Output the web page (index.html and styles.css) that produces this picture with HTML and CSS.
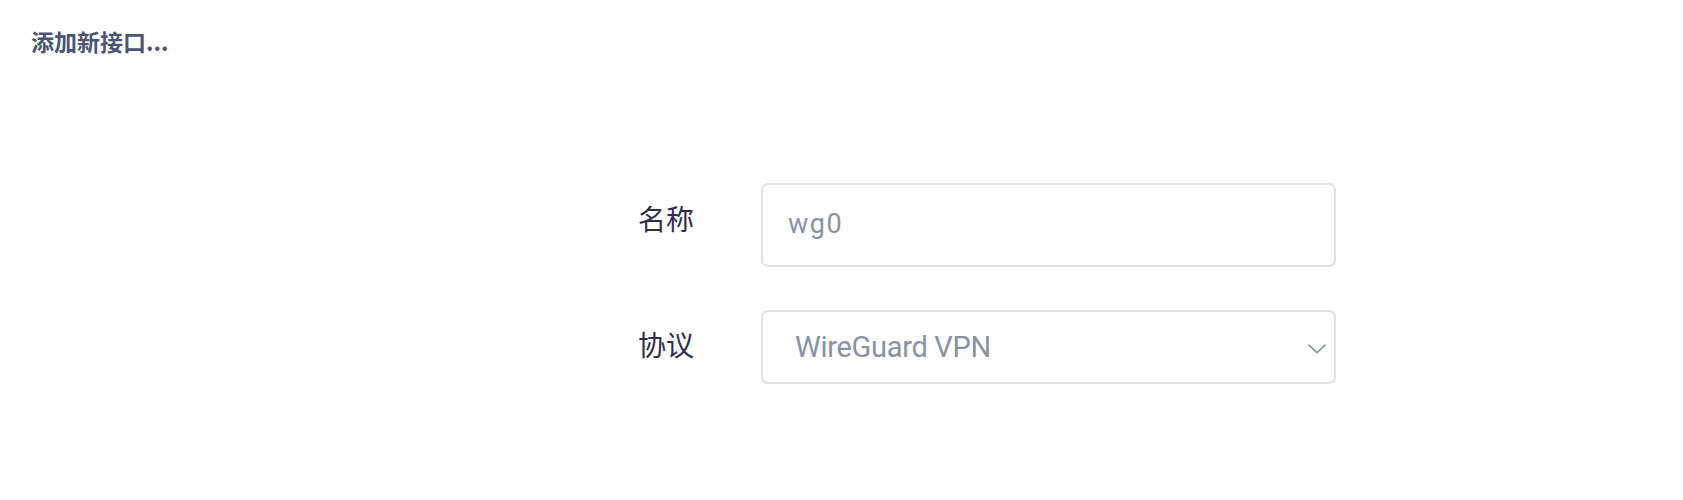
FILE: index.html
```html
<!DOCTYPE html>
<html lang="zh-CN">
<head>
<meta charset="utf-8">
<title>添加新接口</title>
<link rel="stylesheet" href="styles.css">
</head>
<body>
<div class="page">
  <h3 class="title">添加新接口...</h3>
  <div class="form">
    <div class="row row-name">
      <label class="label">名称</label>
      <div class="field input-field">
        <span class="placeholder">wg0</span>
      </div>
    </div>
    <div class="row row-proto">
      <label class="label">协议</label>
      <div class="field select-field">
        <span class="value">WireGuard VPN</span>
        <svg class="chevron" width="18" height="10" viewBox="0 0 18 10"><path d="M1 1.2 L9 8.6 L17 1.2" fill="none" stroke="#8c96a8" stroke-width="1.8" stroke-linecap="round" stroke-linejoin="round"/></svg>
      </div>
    </div>
  </div>
</div>
</body>
</html>
```

FILE: styles.css
```css
html, body {
  margin: 0;
  padding: 0;
  background: #ffffff;
}

body {
  font-family: "Roboto", "Noto Sans CJK SC", sans-serif;
}

.page {
  width: 1683px;
  height: 500px;
  box-sizing: border-box;
  padding: 25px 0 0 31px;
}

.title {
  margin: 0;
  font-size: 23px;
  line-height: 32px;
  font-weight: 700;
  color: #4a5473;
  font-family: "Noto Sans CJK SC", "Roboto", sans-serif;
}

.form {
  display: flex;
  flex-direction: column;
  gap: 43px;
  padding-top: 126px;
  padding-left: 607px;
}

.row {
  display: flex;
  align-items: flex-start;
}

.label {
  width: 123px;
  flex: none;
  font-family: "Noto Sans CJK SC", sans-serif;
  font-size: 28px;
  color: #2e2c52;
  line-height: 40px;
}

.row-name .label {
  padding-top: 15px;
}

.row-proto .label {
  padding-top: 14px;
}

.field {
  width: 575px;
  box-sizing: border-box;
  border: 2px solid #e1e2e6;
  border-radius: 7px;
  display: flex;
  align-items: center;
  background: #fff;
}

.input-field {
  height: 84px;
  padding: 0 0 2px 25px;
}

.placeholder {
  font-size: 27px;
  color: #8593a7;
  letter-spacing: 1.5px;
}

.select-field {
  height: 74px;
  padding: 0 7px 0 32px;
  justify-content: space-between;
}

.value {
  font-size: 29px;
  color: #8593a7;
  letter-spacing: -0.3px;
}

.chevron {
  margin-top: 4px;
  margin-right: 1px;
}
```
